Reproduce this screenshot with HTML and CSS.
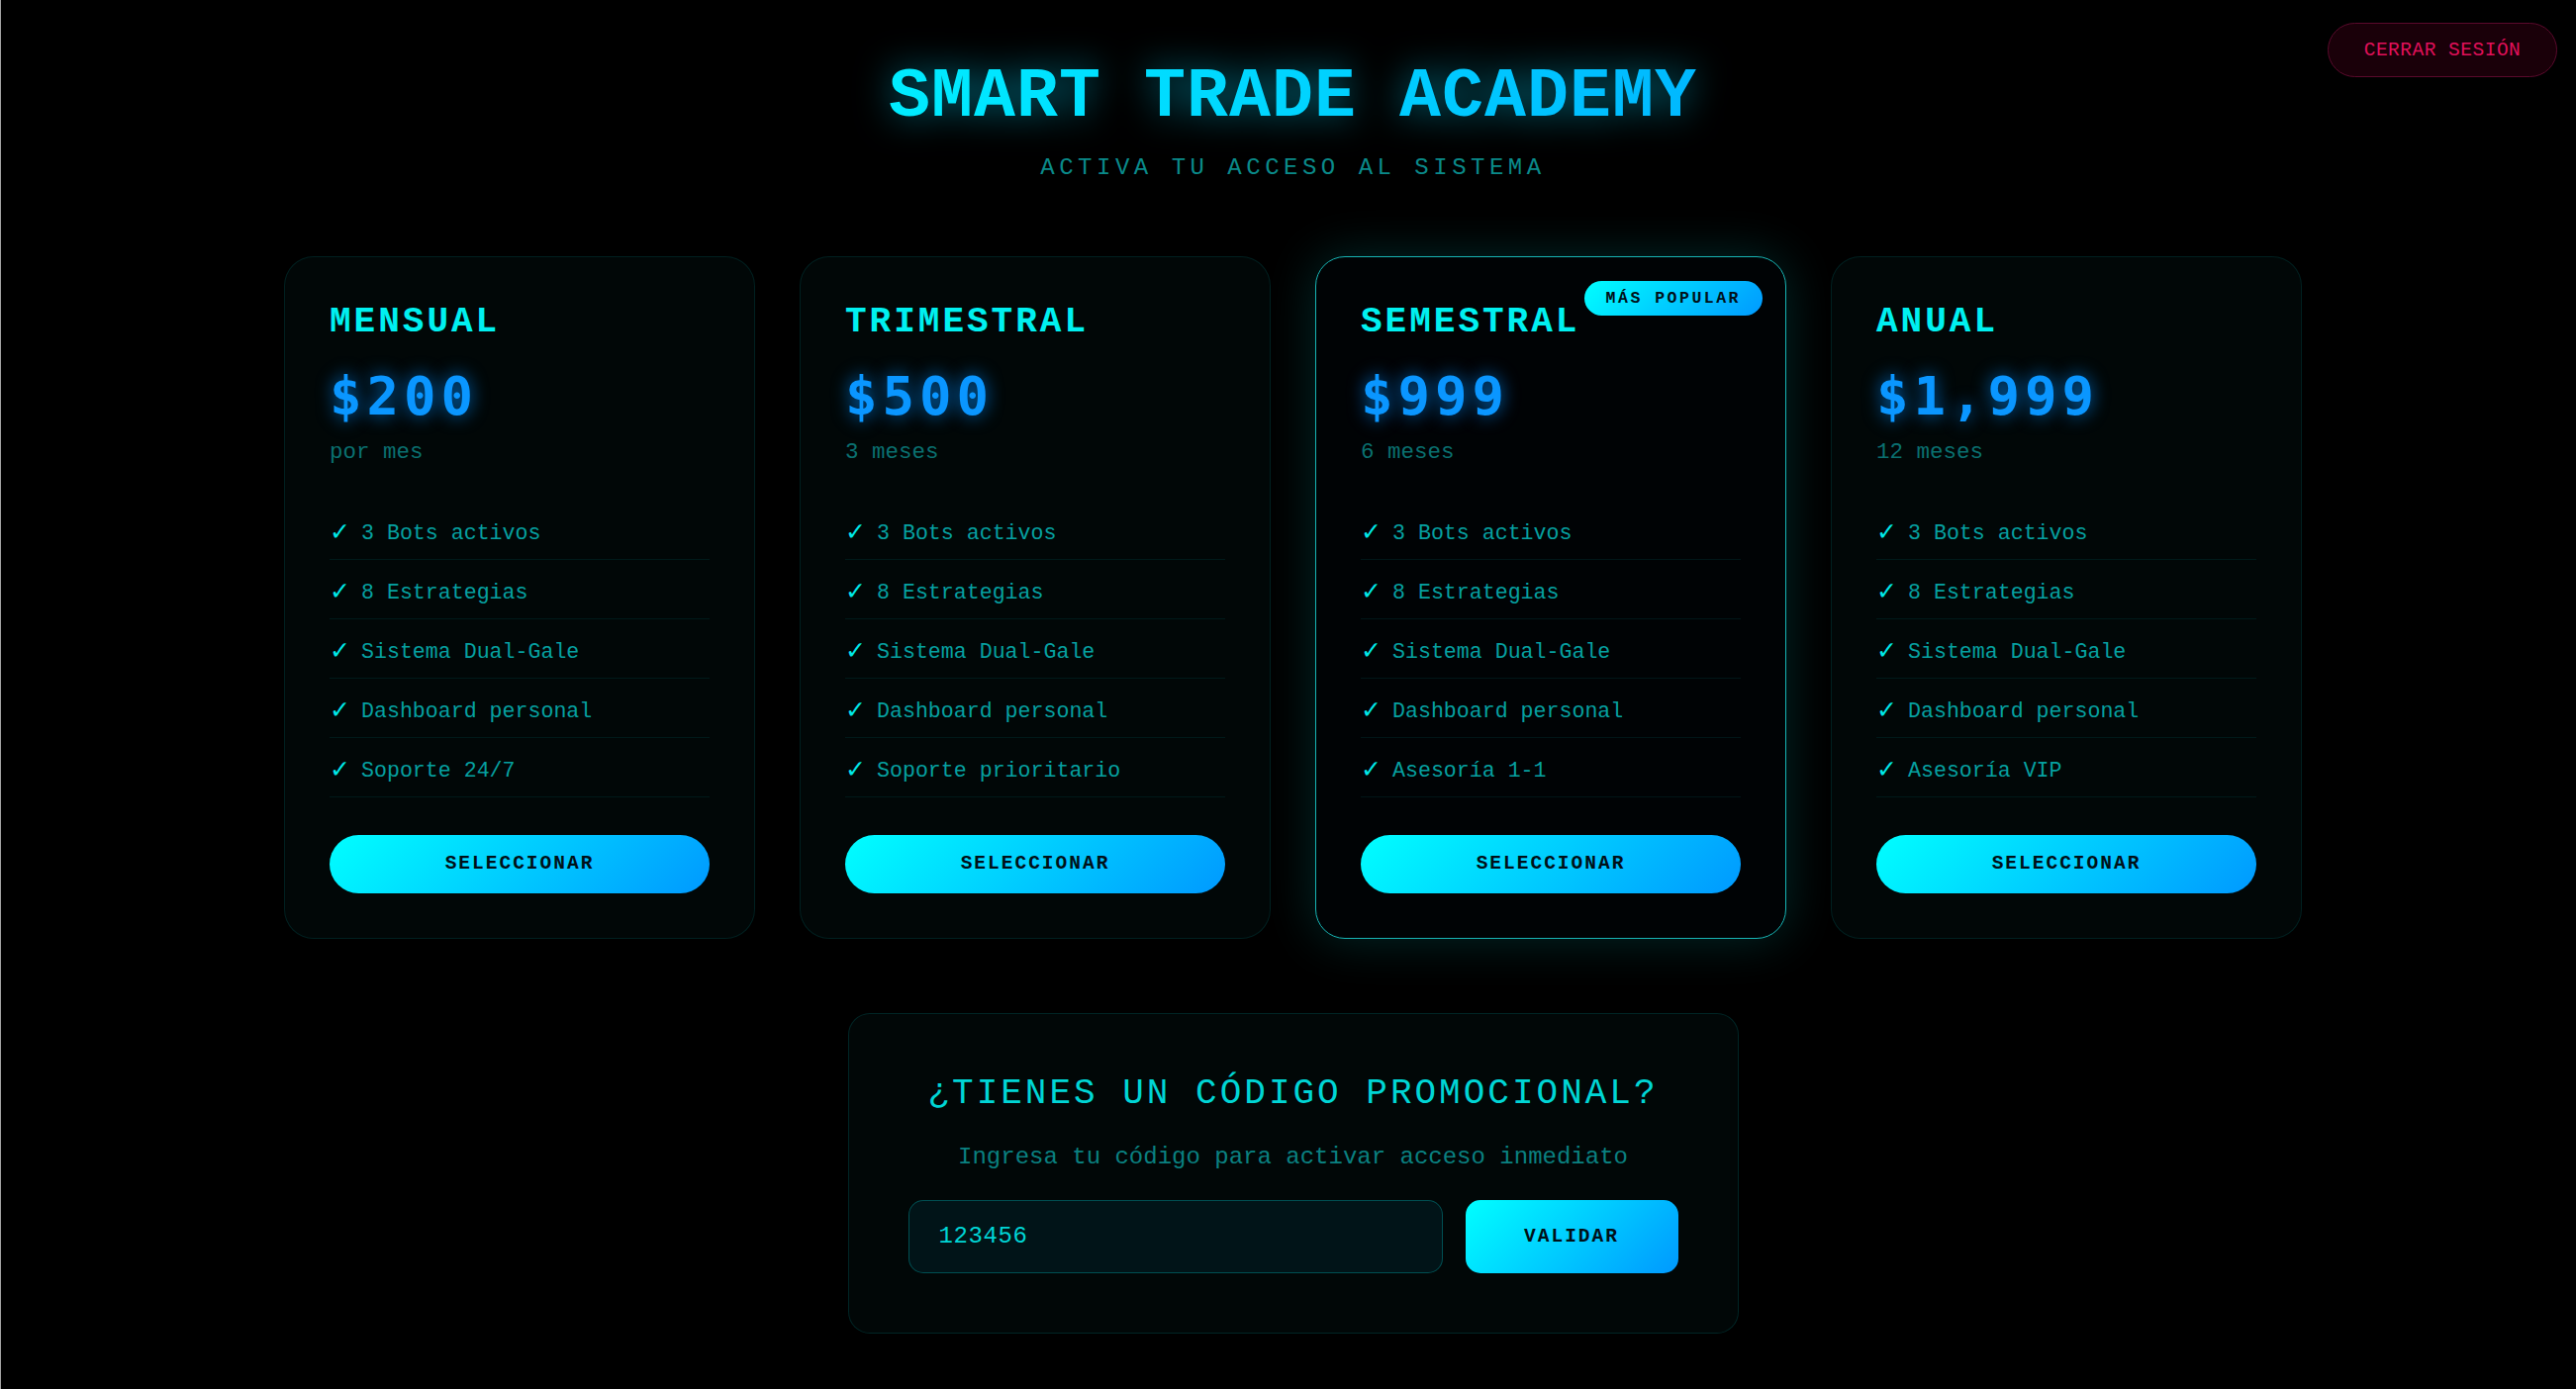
FILE: index.html
```html
<!DOCTYPE html>
<html lang="es">
<head>
<meta charset="utf-8">
<title>Smart Trade Academy</title>
<link rel="stylesheet" href="styles.css">
</head>
<body>
<button class="logout" type="button">CERRAR SESIÓN</button>
<main class="page">
  <header class="hero">
    <h1 class="brand">SMART TRADE ACADEMY</h1>
    <p class="tagline">ACTIVA TU ACCESO AL SISTEMA</p>
  </header>

  <section class="plans">
    <article class="plan">
      <h3 class="plan-name">MENSUAL</h3>
      <div class="price">$200</div>
      <div class="period">por mes</div>
      <ul class="features">
        <li><span class="check">✓</span><span>3 Bots activos</span></li>
        <li><span class="check">✓</span><span>8 Estrategias</span></li>
        <li><span class="check">✓</span><span>Sistema Dual-Gale</span></li>
        <li><span class="check">✓</span><span>Dashboard personal</span></li>
        <li><span class="check">✓</span><span>Soporte 24/7</span></li>
      </ul>
      <button class="select" type="button">SELECCIONAR</button>
    </article>

    <article class="plan">
      <h3 class="plan-name">TRIMESTRAL</h3>
      <div class="price">$500</div>
      <div class="period">3 meses</div>
      <ul class="features">
        <li><span class="check">✓</span><span>3 Bots activos</span></li>
        <li><span class="check">✓</span><span>8 Estrategias</span></li>
        <li><span class="check">✓</span><span>Sistema Dual-Gale</span></li>
        <li><span class="check">✓</span><span>Dashboard personal</span></li>
        <li><span class="check">✓</span><span>Soporte prioritario</span></li>
      </ul>
      <button class="select" type="button">SELECCIONAR</button>
    </article>

    <article class="plan plan-featured">
      <span class="badge">MÁS POPULAR</span>
      <h3 class="plan-name">SEMESTRAL</h3>
      <div class="price">$999</div>
      <div class="period">6 meses</div>
      <ul class="features">
        <li><span class="check">✓</span><span>3 Bots activos</span></li>
        <li><span class="check">✓</span><span>8 Estrategias</span></li>
        <li><span class="check">✓</span><span>Sistema Dual-Gale</span></li>
        <li><span class="check">✓</span><span>Dashboard personal</span></li>
        <li><span class="check">✓</span><span>Asesoría 1-1</span></li>
      </ul>
      <button class="select" type="button">SELECCIONAR</button>
    </article>

    <article class="plan">
      <h3 class="plan-name">ANUAL</h3>
      <div class="price">$1,999</div>
      <div class="period">12 meses</div>
      <ul class="features">
        <li><span class="check">✓</span><span>3 Bots activos</span></li>
        <li><span class="check">✓</span><span>8 Estrategias</span></li>
        <li><span class="check">✓</span><span>Sistema Dual-Gale</span></li>
        <li><span class="check">✓</span><span>Dashboard personal</span></li>
        <li><span class="check">✓</span><span>Asesoría VIP</span></li>
      </ul>
      <button class="select" type="button">SELECCIONAR</button>
    </article>
  </section>

  <section class="promo">
    <h2 class="promo-title">¿TIENES UN CÓDIGO PROMOCIONAL?</h2>
    <p class="promo-text">Ingresa tu código para activar acceso inmediato</p>
    <div class="promo-row">
      <input class="promo-input" type="text" value="123456">
      <button class="validate" type="button">VALIDAR</button>
    </div>
  </section>
</main>
</body>
</html>
```

FILE: styles.css
```css
html, body {
  margin: 0;
  background: #000;
}

body {
  position: relative;
  min-height: 1404px;
  box-sizing: border-box;
  border-left: 1px solid #a3a3a3;
  font-family: "Courier New", "Liberation Mono", monospace;
  color: #00a0a0;
}

.page {
  padding-left: 9px;
}

/* logout */
.logout {
  position: absolute;
  top: 23px;
  right: 19px;
  width: 232px;
  height: 55px;
  box-sizing: border-box;
  border: 1px solid #5a0a2c;
  border-radius: 28px;
  background: #1a0009;
  color: #e0105a;
  font-family: "Courier New", "Liberation Mono", monospace;
  font-size: 19.5px;
  letter-spacing: 0.5px;
  padding: 0;
}

/* header */
.hero {
  display: flex;
  flex-direction: column;
  align-items: center;
  padding-top: 59px;
}

.brand {
  margin: 0;
  font-size: 70px;
  font-weight: bold;
  line-height: normal;
  letter-spacing: 1px;
  background: linear-gradient(90deg, #00ecff 0%, #00d4ff 50%, #00b8ff 100%);
  -webkit-background-clip: text;
  background-clip: text;
  color: transparent;
  filter: drop-shadow(0 0 18px rgba(0, 215, 255, 0.55));
}

.tagline {
  margin: 18px 0 0;
  font-size: 24px;
  letter-spacing: 4.5px;
  color: #0a8a8a;
  line-height: normal;
}

/* plans */
.plans {
  display: grid;
  grid-template-columns: repeat(4, 1fr);
  gap: 45px;
  width: 2039px;
  margin: 76px auto 0;
}

.plan {
  position: relative;
  padding: 45px;
  border: 1px solid rgba(0, 255, 255, 0.1);
  border-radius: 30px;
  background: #010707;
}

.plan-featured {
  border-color: #17b4b4;
  background: #000305;
  box-shadow: 0 0 50px rgba(0, 255, 255, 0.16);
}

.badge {
  position: absolute;
  top: 24px;
  right: 23px;
  height: 35px;
  line-height: 35px;
  padding: 0 22px;
  border-radius: 18px;
  background: linear-gradient(135deg, #00ffff, #0099ff);
  color: #001018;
  font-size: 16.5px;
  font-weight: bold;
  letter-spacing: 2.5px;
}

.plan-name {
  margin: 0;
  font-size: 36px;
  font-weight: bold;
  letter-spacing: 3px;
  line-height: normal;
  color: #00f0f0;
}

.price {
  margin-top: 23.5px;
  font-family: "DejaVu Sans Mono", monospace;
  font-weight: bold;
  font-size: 54px;
  letter-spacing: 5px;
  line-height: 62px;
  color: #0a96ff;
  text-shadow: 0 0 18px rgba(0, 140, 255, 0.75);
}

.period {
  margin-top: 12px;
  font-size: 22.5px;
  line-height: normal;
  color: #0a7070;
}

.features {
  margin: 36px 0 0;
  padding: 0;
  list-style: none;
}

.features li {
  display: flex;
  height: 24px;
  padding: 21px 0 14px;
  line-height: 24px;
  font-size: 21.6px;
  color: #06a0a0;
  border-bottom: 1px solid rgba(0, 255, 255, 0.08);
}

.check {
  flex: none;
  width: 32px;
  margin-top: -1px;
  font-family: "DejaVu Sans", sans-serif;
  font-weight: bold;
  font-size: 25px;
  line-height: 24px;
  color: #00e8e8;
}

.select {
  display: block;
  width: 100%;
  height: 59px;
  margin-top: 38px;
  border: 0;
  border-radius: 30px;
  background: linear-gradient(135deg, #00ffff, #0099ff);
  color: #001018;
  font-family: "Courier New", "Liberation Mono", monospace;
  font-size: 19.5px;
  font-weight: bold;
  letter-spacing: 2px;
  padding: 0;
}

/* promo */
.promo {
  width: 900px;
  box-sizing: border-box;
  margin: 75px auto 0;
  padding: 60px;
  border: 1px solid rgba(0, 255, 255, 0.12);
  border-radius: 22px;
  background: #010707;
  text-align: center;
}

.promo-title {
  margin: 0;
  font-size: 36px;
  font-weight: normal;
  letter-spacing: 3px;
  line-height: normal;
  color: #00d5d5;
}

.promo-text {
  margin: 30px 0 0;
  font-size: 24px;
  line-height: normal;
  color: #0a8080;
}

.promo-row {
  display: flex;
  gap: 23px;
  margin-top: 30px;
}

.promo-input {
  flex: 1;
  min-width: 0;
  height: 74px;
  box-sizing: border-box;
  padding: 0 30px;
  border: 1px solid rgba(0, 255, 255, 0.25);
  border-radius: 15px;
  background: #011418;
  color: #00d5d5;
  font-family: "Courier New", "Liberation Mono", monospace;
  font-size: 24px;
  letter-spacing: 0.6px;
  outline: none;
}

.validate {
  flex: none;
  width: 215px;
  height: 74px;
  border: 0;
  border-radius: 15px;
  background: linear-gradient(135deg, #00ffff, #0099ff);
  color: #001018;
  font-family: "Courier New", "Liberation Mono", monospace;
  font-size: 19.5px;
  font-weight: bold;
  letter-spacing: 2px;
  padding: 0;
}
```
